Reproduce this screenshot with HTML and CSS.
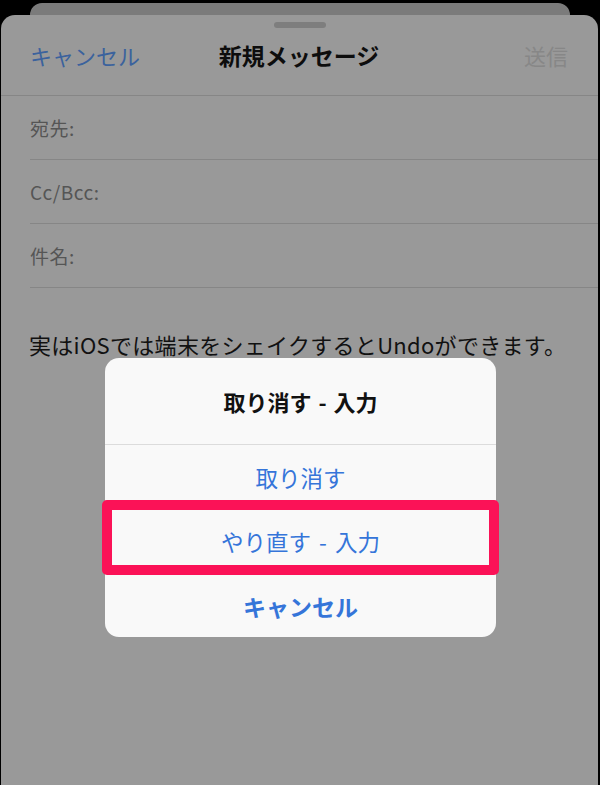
FILE: index.html
```html
<!DOCTYPE html>
<html lang="ja">
<head>
<meta charset="utf-8">
<title>新規メッセージ</title>
<link rel="stylesheet" href="styles.css">
</head>
<body>
<div class="screen">
  <div class="back-sheet"></div>
  <div class="sheet">
    <div class="grabber"></div>
    <div class="nav">
      <span class="nav-cancel">キャンセル</span>
      <span class="nav-title">新規メッセージ</span>
      <span class="nav-send">送信</span>
    </div>
    <div class="fields">
      <div class="field"><span class="label">宛先:</span></div>
      <div class="field"><span class="label">Cc/Bcc:</span></div>
      <div class="field"><span class="label">件名:</span></div>
    </div>
    <p class="body-text">実はiOSでは端末をシェイクするとUndoができます。</p>
  </div>

  <div class="alert">
    <div class="alert-title">取り消す - 入力</div>
    <div class="alert-action">取り消す</div>
    <div class="alert-action">やり直す - 入力</div>
    <div class="alert-action alert-cancel">キャンセル</div>
    <div class="highlight"></div>
  </div>
</div>
</body>
</html>
```

FILE: styles.css
```css
html, body {
  margin: 0;
  padding: 0;
}

body {
  background: #000;
  font-family: "Noto Sans CJK JP", "Noto Sans", "Liberation Sans", sans-serif;
}

.screen {
  position: relative;
  width: 600px;
  height: 785px;
  overflow: hidden;
  background: #000;
  display: flex;
  flex-direction: column;
  padding-top: 3px;
  box-sizing: border-box;
}

.back-sheet {
  flex: 0 0 12px;
  margin: 0 30px;
  background: #7b7b7b;
  border-radius: 12px 12px 0 0;
}

.sheet {
  flex: 1;
  margin: 0 2px 0 1px;
  background: #999999;
  border-radius: 14px 14px 0 0;
  display: flex;
  flex-direction: column;
}

.grabber {
  align-self: center;
  width: 52px;
  height: 6px;
  margin-top: 7px;
  border-radius: 3px;
  background: #7e7e7e;
}

.nav {
  height: 68px;
  box-sizing: border-box;
  display: grid;
  grid-template-columns: 1fr auto 1fr;
  align-items: start;
  padding: 12px 30px 0 29px;
  border-bottom: 1px solid #868686;
  font-size: 22px;
  line-height: 30px;
}

.nav-cancel {
  color: #3b629d;
  justify-self: start;
}

.nav-title {
  color: #0d0d0d;
  font-weight: 700;
  font-size: 23px;
}

.nav-send {
  color: #878787;
  justify-self: end;
}

.fields {
  display: flex;
  flex-direction: column;
}

.field {
  height: 63px;
  margin-left: 29px;
  border-bottom: 1px solid #868686;
  display: flex;
  align-items: center;
}

.label {
  color: #555555;
  font-size: 19px;
  line-height: 24px;
  letter-spacing: 0.5px;
}

.body-text {
  margin: 41px 0 0 28px;
  color: #111111;
  font-size: 22px;
  line-height: 30px;
  letter-spacing: 0.3px;
}

.alert {
  position: absolute;
  left: 105px;
  top: 358px;
  width: 391px;
  height: 279px;
  background: #f9f9f9;
  border-radius: 14px;
  display: flex;
  flex-direction: column;
}

.alert-title {
  height: 86px;
  display: flex;
  align-items: center;
  justify-content: center;
  font-size: 22px;
  font-weight: 700;
  word-spacing: 2px;
  color: #111;
  border-bottom: 1px solid #dcdcdc;
}

.alert-action {
  height: 64px;
  display: flex;
  align-items: center;
  justify-content: center;
  font-size: 22.5px;
  word-spacing: 3px;
  color: #3575d9;
  border-bottom: 1px solid #dcdcdc;
}

.alert-cancel {
  height: 63px;
  border-bottom: none;
  font-weight: 700;
  font-size: 23px;
}

.highlight {
  position: absolute;
  left: -3px;
  top: 142px;
  width: 397px;
  height: 75px;
  box-sizing: border-box;
  border: 10px solid #fb1257;
  border-radius: 5px;
}
```
